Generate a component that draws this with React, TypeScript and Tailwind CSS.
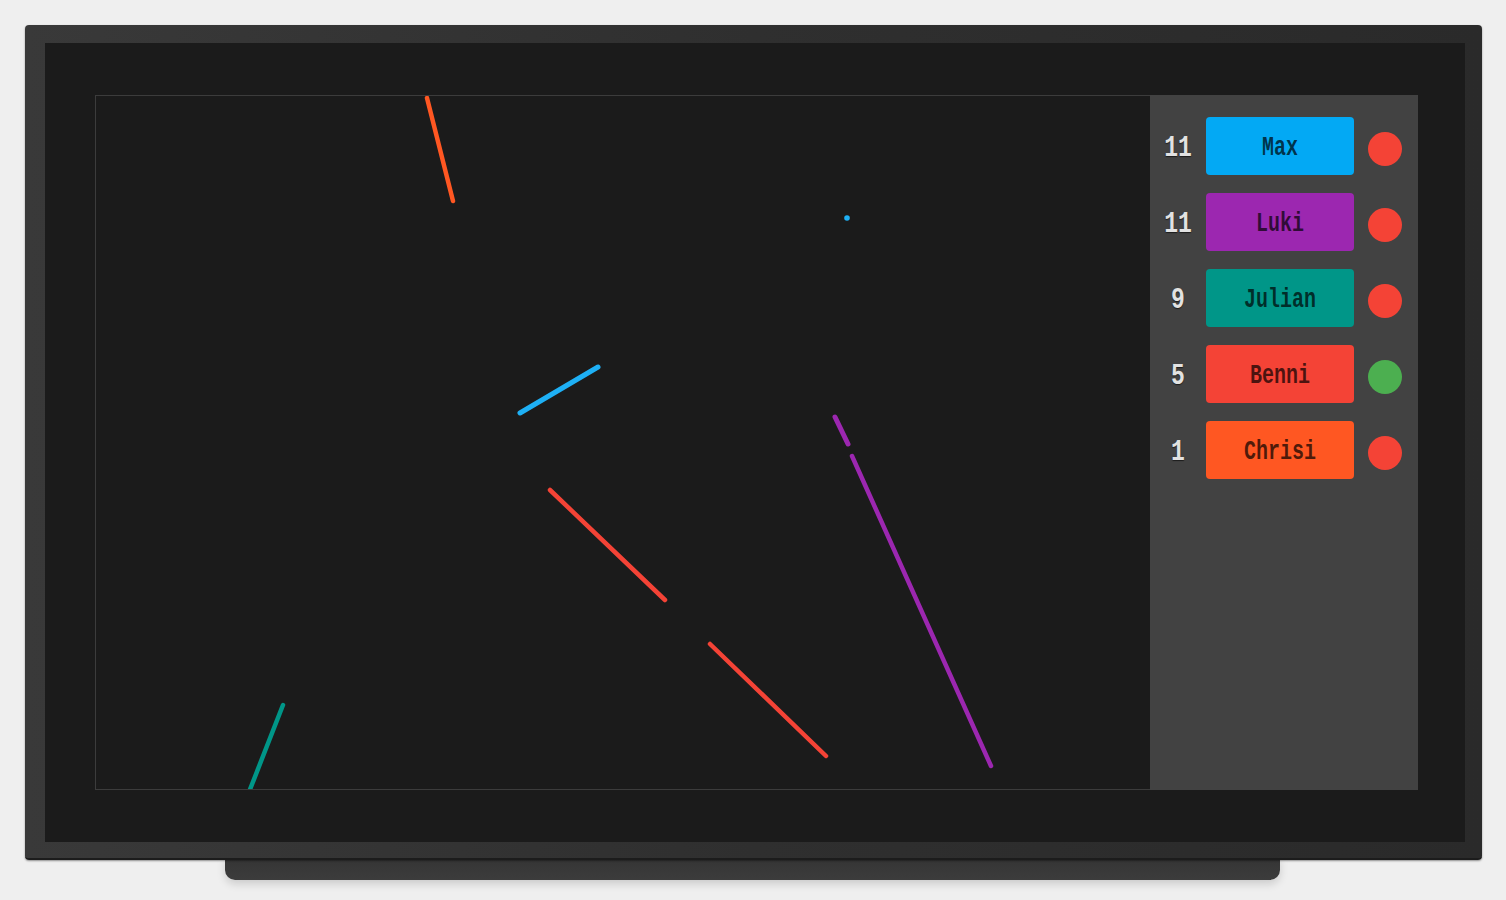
import React from "react";

const players = [
  { score: 11, name: "Max", bg: "bg-[#03a9f4]", dot: "bg-[#f44336]" },
  { score: 11, name: "Luki", bg: "bg-[#9c27b0]", dot: "bg-[#f44336]" },
  { score: 9, name: "Julian", bg: "bg-[#009688]", dot: "bg-[#f44336]" },
  { score: 5, name: "Benni", bg: "bg-[#f44336]", dot: "bg-[#4caf50]" },
  { score: 1, name: "Chrisi", bg: "bg-[#ff5722]", dot: "bg-[#f44336]" },
];

// line coordinates in page space (svg viewBox starts at the game area's origin)
const lines = [
  { x1: 427, y1: 98, x2: 453, y2: 201, c: "#ff5722", w: 4.5 },
  { x1: 520, y1: 413, x2: 598, y2: 367, c: "#1eb0f5", w: 5 },
  { x1: 550, y1: 490, x2: 665, y2: 600, c: "#f44336", w: 4.5 },
  { x1: 710, y1: 644, x2: 826, y2: 756, c: "#f44336", w: 4.5 },
  { x1: 835, y1: 417, x2: 848, y2: 444, c: "#9c27b0", w: 5 },
  { x1: 852, y1: 456, x2: 991, y2: 766, c: "#9c27b0", w: 4.5 },
  { x1: 283, y1: 705, x2: 249, y2: 792, c: "#009688", w: 4.5 },
];

export default function App() {
  return (
    <div className="w-[1506px] h-[900px] bg-[#efefef] overflow-hidden pt-[25px] pl-[25px] font-['Liberation_Mono',monospace]">
      <div className="relative w-[1457px]">
        {/* monitor */}
        <div className="relative z-10 w-[1457px] h-[835px] rounded-[4px] bg-gradient-to-r from-[#393939] via-[#2f2f2f] to-[#2a2a2a] border-b-[2px] border-b-[#1c1c1c] pt-[18px] pl-[20px] shadow-[0_1px_2px_rgba(0,0,0,0.4)]">
          <div className="w-[1420px] h-[799px] bg-[#1b1b1b] pt-[52px] pl-[50px] flex">
            {/* game area */}
            <div className="w-[1055px] h-[695px] border border-r-0 border-[#3c3c3c] bg-[#1b1b1b]">
              <svg width="1054" height="693" viewBox="96 96 1054 693" className="block">
                {lines.map((l, i) => (
                  <line
                    key={i}
                    x1={l.x1}
                    y1={l.y1}
                    x2={l.x2}
                    y2={l.y2}
                    stroke={l.c}
                    strokeWidth={l.w}
                    strokeLinecap="round"
                  />
                ))}
                <circle cx={847} cy={218} r={2.8} fill="#1eb0f5" />
              </svg>
            </div>
            {/* sidebar */}
            <div className="w-[268px] h-[695px] bg-[#424242] pt-[22px] flex flex-col gap-[18px]">
              {players.map((p, i) => (
                <div key={i} className="flex items-center h-[58px]">
                  <div className="w-[56px] flex justify-center text-[23px] text-[#e2e2e2] font-bold translate-y-[2px] scale-y-[1.3] [text-shadow:0_1px_1px_rgba(0,0,0,0.6)]">
                    {p.score}
                  </div>
                  <div
                    className={`w-[148px] h-[58px] rounded-[4px] ${p.bg} flex items-center justify-center text-[20px] font-bold text-black/70`}
                  >
                    <span className="inline-block translate-y-[2px] scale-y-[1.35]">{p.name}</span>
                  </div>
                  <div className={`ml-[14px] w-[34px] h-[34px] rounded-full translate-y-[3px] ${p.dot}`} />
                </div>
              ))}
            </div>
          </div>
        </div>
        {/* stand */}
        <div className="ml-[200px] -mt-[4px] w-[1055px] h-[24px] rounded-b-[10px] bg-gradient-to-b from-[#343434] to-[#3c3c3c] shadow-[0_4px_8px_rgba(0,0,0,0.15)]" />
      </div>
    </div>
  );
}
